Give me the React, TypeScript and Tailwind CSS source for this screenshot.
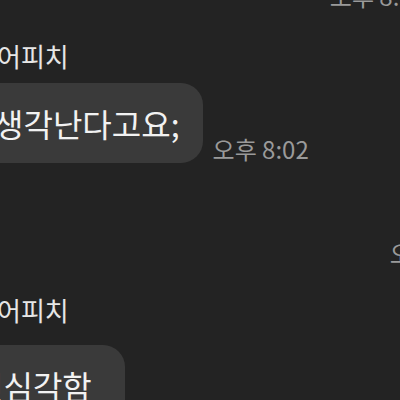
const font = { fontFamily: '"Noto Sans CJK KR", "Noto Sans", sans-serif' };

export default function App() {
  return (
    <div
      className="w-[400px] h-[400px] overflow-hidden bg-[#232323] flex flex-col"
      style={font}
    >
      {/* top timestamp, cut off */}
      <div className="flex justify-end mt-[-17px] mr-[-26px]">
        <span className="text-[24px] text-[#9a9a9a] leading-[26px]">오후 8:01</span>
      </div>

      {/* first sender */}
      <div className="mt-[32px] ml-[-3px] text-[26px] leading-[30px] text-[#e6e6e6]">어피치</div>
      <div className="mt-[12px] flex items-end gap-[10px]">
        <div className="ml-[-22px] rounded-[22px] bg-[#3a3a3a] pl-[16px] pr-[23px] py-[18px] text-[32px] leading-[44px] text-[#f2f2f2]">
          생각난다고요;
        </div>
        <span className="text-[24px] leading-[28px] text-[#9a9a9a]">오후 8:02</span>
      </div>

      {/* cut off time on the right */}
      <div className="mt-[77px] flex justify-end mr-[-86px]">
        <span className="text-[24px] leading-[26px] text-[#9a9a9a]">오후 8:03</span>
      </div>

      {/* second sender */}
      <div className="mt-[29px] ml-[-3px] text-[26px] leading-[30px] text-[#e6e6e6]">어피치</div>
      <div className="mt-[20px] flex items-end gap-[16px]">
        <div className="ml-[-42px] rounded-[22px] bg-[#3a3a3a] pl-[16px] pr-[33px] py-[18px] text-[32px] leading-[44px] text-[#f2f2f2]">
          진심각함
        </div>
        <span className="text-[24px] leading-[28px] text-[#9a9a9a]">오후 8:03</span>
      </div>
    </div>
  );
}
